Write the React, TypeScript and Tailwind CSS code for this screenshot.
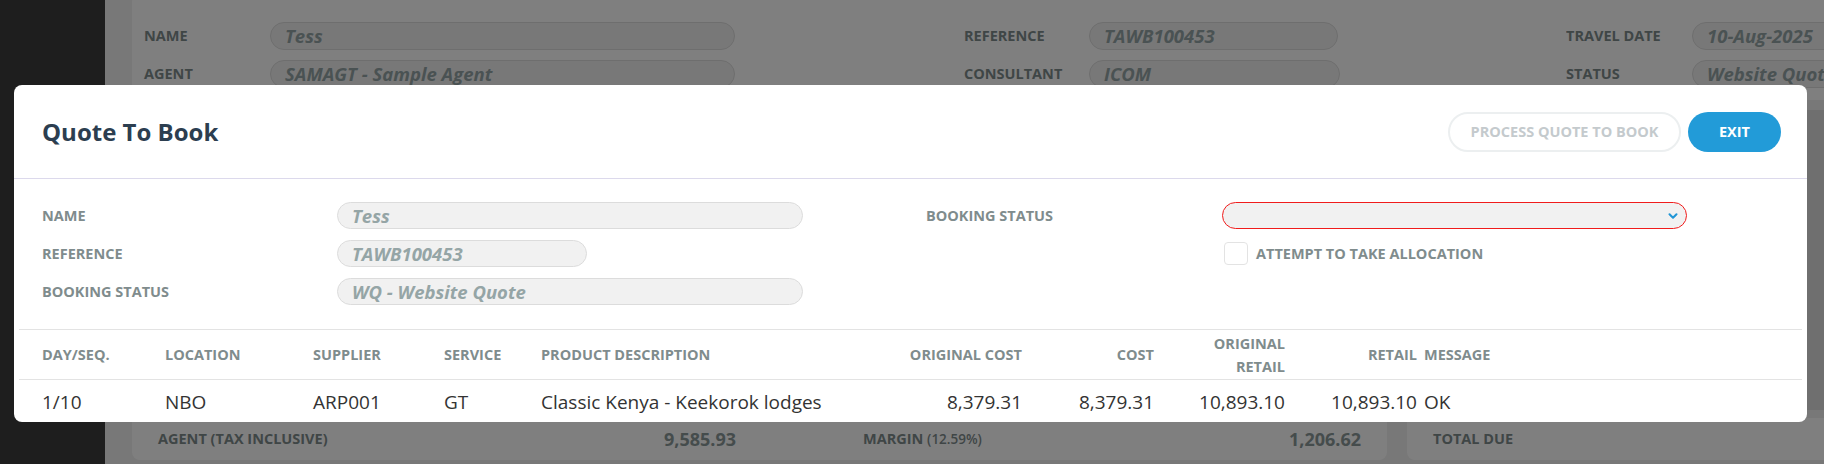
import { ChevronDown } from 'lucide-react';

const label = "text-[14.5px] font-bold uppercase text-[#7f8c8d]";
const pill = "flex items-center whitespace-nowrap rounded-full border border-[#dcdcdc] bg-[#f1f1f1] pl-[14px] text-[18.5px] font-bold italic text-[#95a5a6]";

function BgField({ name, value, labelW, inputW }: { name: string; value: string; labelW: number; inputW: number }) {
    return (
        <div className="flex h-[28px] items-center">
            <span className={label} style={{ width: labelW }}>{name}</span>
            <div className={pill + " h-[28px]"} style={{ width: inputW }}>{value}</div>
        </div>
    );
}

function Field({ name, value, width }: { name: string; value: string; width: number }) {
    return (
        <div className="flex h-[27px] items-center">
            <span className={label + " w-[295px]"}>{name}</span>
            <div className={pill + " h-[27px]"} style={{ width }}>{value}</div>
        </div>
    );
}

const cols = "grid grid-cols-[123px_148px_131px_97px_349px_132px_132px_131px_132px_1fr]";

export default function App() {
    return (
        <div className="relative flex h-[464px] w-[1824px] overflow-hidden bg-[#f0f0f0] font-['Open_Sans','Noto_Sans',sans-serif]">
            {/* Sidebar */}
            <div className="w-[105px] shrink-0 bg-[#3d3d3d]" />

            {/* Page behind the dialog */}
            <div className="flex flex-1 flex-col pl-[27px]">
                <div className="-mt-[6px] flex h-[106px] rounded-tl-lg bg-white pl-[12px] pt-[28px]">
                    <div className="flex w-[820px] flex-col gap-[10px]">
                        <BgField name="Name" value="Tess" labelW={126} inputW={465} />
                        <BgField name="Agent" value="SAMAGT - Sample Agent" labelW={126} inputW={465} />
                    </div>
                    <div className="flex w-[602px] flex-col gap-[10px]">
                        <BgField name="Reference" value="TAWB100453" labelW={125} inputW={249} />
                        <BgField name="Consultant" value="ICOM" labelW={125} inputW={251} />
                    </div>
                    <div className="flex flex-1 flex-col gap-[10px] overflow-hidden">
                        <BgField name="Travel Date" value="10-Aug-2025" labelW={126} inputW={200} />
                        <BgField name="Status" value="Website Quote" labelW={126} inputW={200} />
                    </div>
                </div>
                <div className="mt-[10px] h-[300px] bg-[#dedede]" />
                <div className="mt-[8px] flex h-[42px] gap-[20px]">
                    <div className="flex w-[1255px] items-center rounded-b-lg bg-white pl-[26px]">
                        <div className="flex w-[578px] items-center justify-between">
                            <span className="text-[14.5px] font-bold uppercase text-[#7f8c8d]">Agent (Tax Inclusive)</span>
                            <span className="text-[18px] font-bold text-[#8a9899]">9,585.93</span>
                        </div>
                        <div className="ml-[127px] flex w-[498px] items-center justify-between">
                            <span className="text-[14.5px] font-bold uppercase text-[#7f8c8d]">
                                Margin <span className="text-[13.5px] font-semibold">(12.59%)</span>
                            </span>
                            <span className="text-[18px] font-bold text-[#8a9899]">1,206.62</span>
                        </div>
                    </div>
                    <div className="flex flex-1 items-center rounded-bl-lg bg-white pl-[26px]">
                        <span className="text-[14.5px] font-bold uppercase text-[#7f8c8d]">Total Due</span>
                    </div>
                </div>
            </div>

            {/* Backdrop */}
            <div className="absolute inset-0 bg-black/50" />

            {/* Dialog */}
            <div className="absolute left-[14px] top-[85px] h-[337px] w-[1793px] overflow-hidden rounded-lg bg-white">
                <div className="flex h-[94px] items-center justify-between border-b border-[#dcd9ec] pl-[28px] pr-[26px]">
                    <h2 className="text-[24px] font-bold text-[#2c3e50]">Quote To Book</h2>
                    <div className="flex items-center gap-[7px]">
                        <button className="h-[40px] w-[233px] rounded-full border-2 border-[#eceff0] text-[14.5px] font-bold uppercase text-[#c4cacd]">
                            Process Quote To Book
                        </button>
                        <button className="h-[40px] w-[93px] rounded-full bg-[#229bd8] text-[14.5px] font-bold text-white">
                            EXIT
                        </button>
                    </div>
                </div>

                <div className="mx-[5px]">
                    <div className="grid grid-cols-[884px_1fr] border-b border-[#e3e3e3] pb-[24px] pl-[23px] pt-[23px]">
                        <div className="flex flex-col gap-[11px]">
                            <Field name="Name" value="Tess" width={466} />
                            <Field name="Reference" value="TAWB100453" width={250} />
                            <Field name="Booking Status" value="WQ - Website Quote" width={466} />
                        </div>
                        <div className="flex flex-col gap-[13px]">
                            <div className="flex h-[27px] items-center">
                                <span className={label + " w-[296px]"}>Booking Status</span>
                                <div className="flex h-[27px] w-[465px] items-center justify-end rounded-full border border-[#f01c1c] bg-[#f1f1f1] pr-[6px]">
                                    <ChevronDown size={14} strokeWidth={3.5} className="text-[#2196d6]" />
                                </div>
                            </div>
                            <div className="flex items-center gap-[8px] pl-[298px]">
                                <div className="h-[23px] w-[24px] rounded-[4px] border border-[#e3e3e3] bg-white" />
                                <span className={label}>Attempt To Take Allocation</span>
                            </div>
                        </div>
                    </div>

                    <div className={cols + " h-[50px] items-center border-b border-[#e3e3e3] pl-[23px] leading-[23px]"}>
                        <span className={label}>Day/Seq.</span>
                        <span className={label}>Location</span>
                        <span className={label}>Supplier</span>
                        <span className={label}>Service</span>
                        <span className={label}>Product Description</span>
                        <span className={label + " text-right"}>Original Cost</span>
                        <span className={label + " text-right"}>Cost</span>
                        <span className={label + " flex flex-col items-end"}>
                            <span>Original</span>
                            <span>Retail</span>
                        </span>
                        <span className={label + " text-right"}>Retail</span>
                        <span className={label + " pl-[7px]"}>Message</span>
                    </div>

                    <div className={cols + " h-[45px] items-center pl-[23px] text-[19px] text-[#333]"}>
                        <span>1/10</span>
                        <span>NBO</span>
                        <span>ARP001</span>
                        <span>GT</span>
                        <span>Classic Kenya - Keekorok lodges</span>
                        <span className="text-right">8,379.31</span>
                        <span className="text-right">8,379.31</span>
                        <span className="text-right">10,893.10</span>
                        <span className="text-right">10,893.10</span>
                        <span className="pl-[7px]">OK</span>
                    </div>
                </div>
            </div>
        </div>
    );
}
